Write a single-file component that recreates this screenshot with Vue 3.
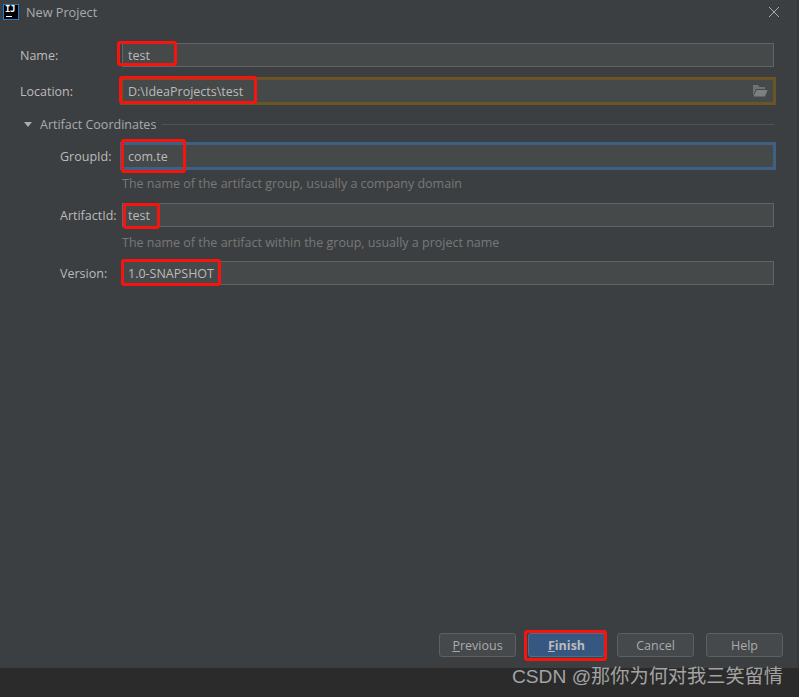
<script setup>
const fields = [
  { key: 'name', label: 'Name:', value: 'test', mark: 'mark-name', cls: 'row-name' },
  { key: 'location', label: 'Location:', value: 'D:\\IdeaProjects\\test', mark: 'mark-location', cls: 'row-location', state: 'warn', folder: true }
]
const artifact = [
  { key: 'group', label: 'GroupId:', value: 'com.te', mark: 'mark-group', state: 'focus', cls: 'row-group', hint: 'The name of the artifact group, usually a company domain' },
  { key: 'artifact', label: 'ArtifactId:', value: 'test', mark: 'mark-artifact', cls: 'row-artifact', hint: 'The name of the artifact within the group, usually a project name' },
  { key: 'version', label: 'Version:', value: '1.0-SNAPSHOT', mark: 'mark-version', cls: 'row-version' }
]
</script>

<template>
  <div class="page">
    <div class="dialog">
      <header class="titlebar">
        <div class="logo"><span class="logo-text">IJ</span><span class="logo-bar"></span></div>
        <span class="title">New Project</span>
        <svg class="close" width="12" height="12" viewBox="0 0 12 12">
          <path d="M1 1 L11 11 M11 1 L1 11" stroke="#a9abad" stroke-width="1" fill="none" />
        </svg>
      </header>

      <div class="form">
        <div v-for="f in fields" :key="f.key" class="row" :class="f.cls">
          <label class="label">{{ f.label }}</label>
          <div class="field" :class="f.state">
            <span class="value">{{ f.value }}</span>
            <svg v-if="f.folder" class="folder" width="16" height="14" viewBox="0 0 16 14">
              <path d="M1 1 H6 L7.500 3 H13 V5 H4 L1 12 Z" fill="#6e7274" />
              <path d="M4.500 6 H15.500 L13 12.500 H1.500 Z" fill="#7c8082" />
            </svg>
            <span class="mark" :class="f.mark"></span>
          </div>
        </div>

        <div class="section">
          <span class="triangle"></span>
          <span class="section-title">Artifact Coordinates</span>
          <span class="section-line"></span>
        </div>

        <template v-for="f in artifact" :key="f.key">
          <div class="row sub" :class="f.cls">
            <label class="label">{{ f.label }}</label>
            <div class="field" :class="f.state">
              <span class="value">{{ f.value }}</span>
              <span class="mark" :class="f.mark"></span>
            </div>
          </div>
          <p v-if="f.hint" class="hint" :class="'hint-' + f.key">{{ f.hint }}</p>
        </template>
      </div>

      <footer class="actions">
        <button class="btn"><u>P</u>revious</button>
        <button class="btn primary"><u>F</u>inish<span class="mark mark-finish"></span></button>
        <button class="btn">Cancel</button>
        <button class="btn">Help</button>
      </footer>
    </div>
    <div class="strip">
      <span class="watermark">CSDN @那你为何对我三笑留情</span>
    </div>
  </div>
</template>

<style>
html, body { margin: 0; background: #3c3f41; }
</style>

<style scoped>
.page {
  width: 799px;
  height: 697px;
  display: flex;
  flex-direction: column;
  overflow: hidden;
  font-family: "Open Sans", "Noto Sans", "Noto Sans CJK SC", sans-serif;
  font-size: 12.5px;
  color: #bbbbbb;
  background: #3c3f41;
}
.dialog {
  height: 668px;
  flex: none;
  box-sizing: border-box;
  display: flex;
  flex-direction: column;
  background: #3c3f41;
  border-right: 2px solid #36393a;
}
.titlebar {
  height: 23px;
  display: flex;
  align-items: center;
  padding: 0 17px 0 3px;
  flex: none;
}
.logo {
  width: 16px;
  height: 16px;
  box-sizing: border-box;
  border: 1px solid #1f7fd6;
  background: #000;
  position: relative;
  color: #fff;
  flex: none;
}
.logo-text {
  position: absolute;
  left: 1px;
  top: 0;
  font: bold 9px/9px "DejaVu Sans Mono", monospace;
  letter-spacing: -0.5px;
}
.logo-bar {
  position: absolute;
  left: 2px;
  bottom: 2px;
  width: 6px;
  height: 1px;
  background: #fff;
}
.title {
  margin-left: 7px;
  color: #a9abad;
  font-size: 12.7px;
  flex: 1;
}
.form {
  flex: 1;
  padding: 20px 23px 0 20px;
  display: flex;
  flex-direction: column;
}
.row {
  display: flex;
  align-items: center;
}
.label {
  width: 102px;
  flex: none;
  color: #bbbbbb;
}
.sub .label {
  width: 62px;
  margin-left: 40px;
}
.field {
  flex: 1;
  height: 24px;
  box-sizing: border-box;
  border: 1px solid #646464;
  background: #45494a;
  padding: 0 5px;
  display: flex;
  align-items: center;
  position: relative;
  color: #bbbbbb;
}
.value { flex: 1; }
.field.warn {
  height: 28px;
  margin: 0 -2px 0 -2px;
  padding: 0 4px 0 5px;
  border: 3px solid #6c5424;
}
.field.focus {
  height: 28px;
  margin: 0 -2px 0 -2px;
  padding: 0 4px 0 5px;
  border: 3px solid #3d6185;
}
.folder { margin-right: 1px; }
.row-location { margin-top: 10px; }
.section {
  display: flex;
  align-items: center;
  margin-top: 11px;
  height: 16px;
  padding-left: 4px;
}
.triangle {
  width: 0;
  height: 0;
  border-left: 4px solid transparent;
  border-right: 4px solid transparent;
  border-top: 5px solid #a9abad;
  margin-right: 8px;
}
.section-title { color: #a9abad; }
.section-line {
  flex: 1;
  height: 1px;
  background: #515151;
  margin-left: 6px;
}
.row-group { margin-top: 10px; }
.row-artifact { margin-top: 11px; }
.row-version { margin-top: 10px; }
.hint {
  margin: 5px 0 0 102px;
  color: #787878;
  line-height: 17px;
}
.hint-artifact { margin-top: 7px; }
.mark {
  position: absolute;
  box-sizing: border-box;
  border: 3px solid #f7130e;
  border-radius: 3px;
  pointer-events: none;
}
.mark-name { left: -6px; top: -3px; width: 60px; height: 25px; }
.mark-location { left: -4px; top: -4px; width: 138px; height: 28px; }
.mark-group { left: -2px; top: -6px; width: 65px; height: 34px; }
.mark-artifact { left: 0; top: -1px; width: 37px; height: 26px; }
.mark-version { left: -2px; top: -3px; width: 100px; height: 27px; }
.actions {
  display: flex;
  justify-content: flex-end;
  gap: 12px;
  padding: 0 14px 11px 0;
  flex: none;
}
.btn {
  width: 77px;
  height: 24px;
  box-sizing: border-box;
  background: #46494b;
  border: 1px solid #5e6060;
  border-radius: 3px;
  color: #a9abad;
  font: 12.5px "Open Sans", "Noto Sans", sans-serif;
  padding: 0;
  position: relative;
}
.btn.primary {
  background: #365880;
  border-color: #4c708c;
  color: #bbbbbb;
  font-weight: 700;
}
.mark-finish { left: -5px; top: -4px; width: 83px; height: 31px; }
.strip {
  flex: none;
  height: 29px;
  box-sizing: border-box;
  background: #2b2b2b;
  display: flex;
  justify-content: flex-end;
  align-items: center;
  padding: 0 16px 11px 0;
}
.watermark {
  font-family: "Liberation Sans", "Noto Sans CJK SC", sans-serif;
  font-size: 19.2px;
  line-height: 18px;
  color: #a3a3a3;
}
</style>
